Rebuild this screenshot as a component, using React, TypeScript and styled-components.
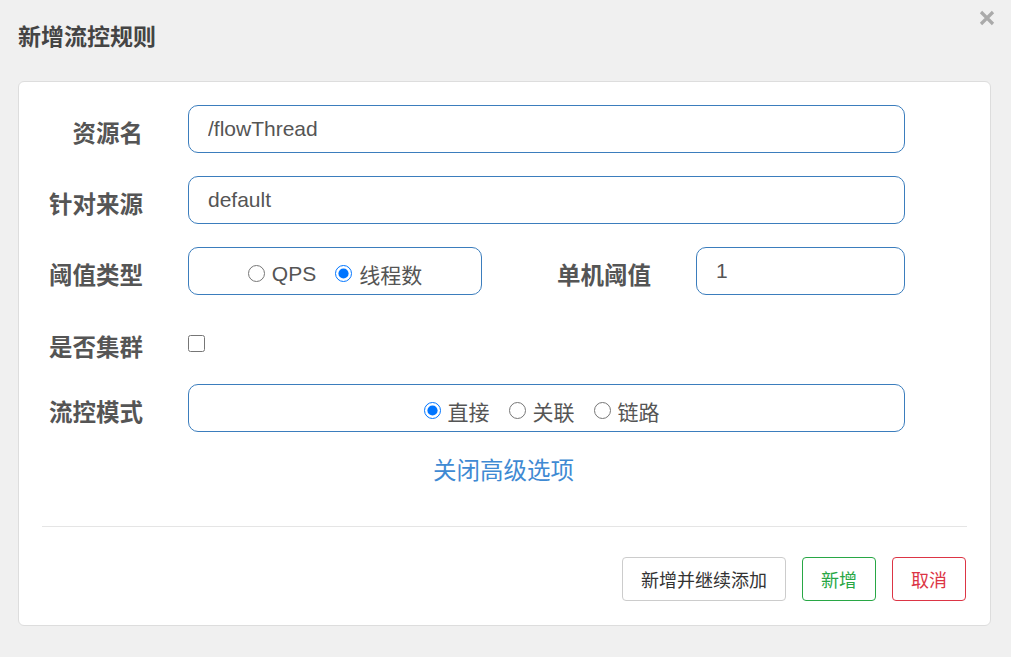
import React from "react";
import styled, { createGlobalStyle } from "styled-components";

const Global = createGlobalStyle`
  html, body { margin: 0; padding: 0; background: #f0f0f0; }
  body { font-family: "Liberation Sans", "Noto Sans CJK SC", sans-serif; }
  * { box-sizing: border-box; }
`;

const Page = styled.div`
  width: 1011px;
  height: 657px;
  background: #f0f0f0;
`;

const Header = styled.div`
  display: flex;
  justify-content: space-between;
  align-items: flex-start;
  padding: 20px 16px 0 18px;
  height: 81px;
`;

const Title = styled.h1`
  margin: 0;
  font-family: "Noto Sans CJK SC", sans-serif;
  font-size: 23px;
  line-height: 30px;
  font-weight: 700;
  color: #444;
`;

const Close = styled.button`
  border: 0;
  background: none;
  padding: 0;
  margin-top: -10px;
  width: 16px;
  height: 16px;
  cursor: pointer;
  display: flex;
`;

const Card = styled.div`
  margin-left: 18px;
  width: 973px;
  background: #fff;
  border: 1px solid #ddd;
  border-radius: 6px;
  padding: 23px 23px 24px 23px;
`;

const Form = styled.div`
  display: flex;
  flex-direction: column;
  gap: 23px;
`;

const Row = styled.div<{ $h?: number; $pt?: number }>`
  display: flex;
  align-items: center;
  height: ${(p) => p.$h ?? 48}px;
  padding-top: ${(p) => p.$pt ?? 0}px;
`;

const Label = styled.label<{ $w?: number }>`
  width: ${(p) => p.$w ?? 101}px;
  flex: none;
  text-align: right;
  margin-right: 45px;
  padding-top: 5px;
  font-family: "Noto Sans CJK SC", sans-serif;
  font-weight: 700;
  font-size: 23.5px;
  color: #555;
  white-space: nowrap;
`;

const TextInput = styled.input<{ $w: number }>`
  width: ${(p) => p.$w}px;
  height: 48px;
  border: 1px solid #3b7dbd;
  border-radius: 10px;
  padding: 0 19px;
  font-family: "Liberation Sans", "Noto Sans CJK SC", sans-serif;
  font-size: 21px;
  color: #555;
  background: #fff;
  outline: none;
`;

const RadioBox = styled.div<{ $w: number; $shift?: number }>`
  width: ${(p) => p.$w}px;
  height: 48px;
  border: 1px solid #3b7dbd;
  border-radius: 10px;
  display: flex;
  align-items: center;
  justify-content: center;
  gap: 19px;
  padding-top: 5px;
  padding-right: ${(p) => p.$shift ?? 0}px;
`;

const RadioLabel = styled.label`
  display: flex;
  align-items: center;
  gap: 7px;
  font-family: "Liberation Sans", "Noto Sans CJK SC", sans-serif;
  font-size: 21px;
  color: #555;
  cursor: pointer;
`;

const Radio = styled.input.attrs({ type: "radio" })`
  width: 17px;
  height: 17px;
  margin: 0;
  accent-color: #0075ff;
`;

const Check = styled.input.attrs({ type: "checkbox" })`
  width: 17px;
  height: 17px;
  margin: 0 0 0 0;
`;

const LinkRow = styled.div`
  display: flex;
  justify-content: center;
  margin-top: 22px;
`;

const Link = styled.a`
  font-family: "Noto Sans CJK SC", sans-serif;
  font-size: 23.5px;
  line-height: 30px;
  color: #3f8ad3;
  text-decoration: none;
  cursor: pointer;
  margin-right: 2px;
`;

const Divider = styled.hr`
  margin: 42px 0 30px 0;
  border: 0;
  border-top: 1px solid #e5e5e5;
  height: 0;
`;

const Footer = styled.div`
  display: flex;
  justify-content: flex-end;
  gap: 16px;
  padding-right: 1px;
`;

const Btn = styled.button<{ $c: string; $b: string }>`
  height: 44px;
  padding: 0 18px;
  background: #fff;
  border: 1px solid ${(p) => p.$b};
  color: ${(p) => p.$c};
  border-radius: 4px;
  font-family: "Noto Sans CJK SC", sans-serif;
  font-size: 18px;
  cursor: pointer;
`;

export default function App() {
  return (
    <Page>
      <Global />
      <Header>
        <Title>新增流控规则</Title>
        <Close aria-label="close">
          <svg width="16" height="16" viewBox="0 0 16 16">
            <path d="M2 2 L14 14 M14 2 L2 14" stroke="#aaa" strokeWidth="3.2" strokeLinecap="butt" />
          </svg>
        </Close>
      </Header>
      <Card>
        <Form>
          <Row>
            <Label>资源名</Label>
            <TextInput $w={717} defaultValue="/flowThread" />
          </Row>
          <Row>
            <Label>针对来源</Label>
            <TextInput $w={717} defaultValue="default" />
          </Row>
          <Row>
            <Label>阈值类型</Label>
            <RadioBox $w={294}>
              <RadioLabel>
                <Radio name="grade" />
                QPS
              </RadioLabel>
              <RadioLabel>
                <Radio name="grade" defaultChecked />
                线程数
              </RadioLabel>
            </RadioBox>
            <Label $w={169}>单机阈值</Label>
            <TextInput $w={209} defaultValue="1" />
          </Row>
          <Row $h={43} $pt={8}>
            <Label>是否集群</Label>
            <Check />
          </Row>
          <Row>
            <Label>流控模式</Label>
            <RadioBox $w={717} $shift={10}>
              <RadioLabel>
                <Radio name="strategy" defaultChecked />
                直接
              </RadioLabel>
              <RadioLabel>
                <Radio name="strategy" />
                关联
              </RadioLabel>
              <RadioLabel>
                <Radio name="strategy" />
                链路
              </RadioLabel>
            </RadioBox>
          </Row>
        </Form>
        <LinkRow>
          <Link>关闭高级选项</Link>
        </LinkRow>
        <Divider />
        <Footer>
          <Btn $c="#333" $b="#ccc">新增并继续添加</Btn>
          <Btn $c="#28a745" $b="#28a745">新增</Btn>
          <Btn $c="#dc3545" $b="#dc3545">取消</Btn>
        </Footer>
      </Card>
    </Page>
  );
}
